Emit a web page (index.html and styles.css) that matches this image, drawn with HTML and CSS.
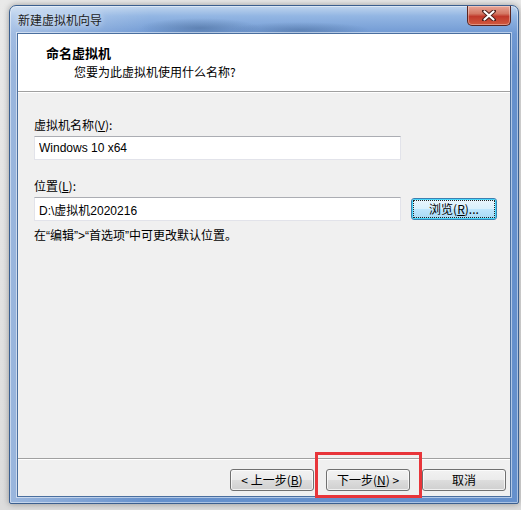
FILE: index.html
```html
<!DOCTYPE html>
<html lang="zh-CN">
<head>
    <meta charset="UTF-8">
    <meta name="viewport" content="width=device-width, initial-scale=1.0">
    <title>新建虚拟机向导</title>
    <link rel="stylesheet" href="styles.css">
</head>
<body>
    <div class="window">
        <div class="titlebar">
            <span class="title">新建虚拟机向导</span>
            <button class="close" type="button" aria-label="关闭">
                <svg width="14" height="11" viewBox="0 0 14 11">
                    <path d="M2 1 L12 10 M12 1 L2 10" stroke="#4a1e1a" stroke-width="4" stroke-linecap="round"/>
                    <path d="M2.5 1.5 L11.5 9.5 M11.5 1.5 L2.5 9.5" stroke="#fff" stroke-width="2.2" stroke-linecap="round"/>
                </svg>
            </button>
        </div>

        <div class="client">
            <div class="header">
                <div class="header-title">命名虚拟机</div>
                <div class="header-sub">您要为此虚拟机使用什么名称?</div>
            </div>

            <div class="content">
                <div class="field">
                    <label for="vmName">虚拟机名称(<u>V</u>):</label>
                    <input id="vmName" class="textbox" type="text" value="Windows 10 x64">
                </div>

                <div class="field field-location">
                    <label for="vmPath">位置(<u>L</u>):</label>
                    <div class="row">
                        <input id="vmPath" class="textbox" type="text" value="D:\虚拟机2020216">
                        <button class="btn btn-browse" type="button"><span class="focus">浏览(<u>R</u>)...</span></button>
                    </div>
                </div>

                <p class="hint">在“编辑”&gt;“首选项”中可更改默认位置。</p>
            </div>

            <div class="footer">
                <button class="btn" type="button">&lt; 上一步(<u>B</u>)</button>
                <div class="next-wrap">
                    <button class="btn" type="button">下一步(<u>N</u>) &gt;</button>
                    <span class="highlight"></span>
                </div>
                <button class="btn" type="button">取消</button>
            </div>
        </div>
    </div>
</body>
</html>
```

FILE: styles.css
```css
:root {
    --face: #f0f0f0;
    --frame: #6590cc;
    --text: #000;
    --cjk: "Noto Sans CJK SC", sans-serif;
    --latin: "Liberation Sans", "Noto Sans CJK SC", sans-serif;
}

html, body {
    margin: 0;
    height: 100%;
}

body {
    background: linear-gradient(to bottom, #e9e9e9, #dcdcdc);
    font-family: var(--latin);
    font-size: 12px;
    color: var(--text);
    overflow: hidden;
}

/* window frame */
.window {
    width: 510px;
    height: 499px;
    margin: 5px 0 0 9px;
    padding: 0 7px 6px 7px;
    box-sizing: border-box;
    display: flex;
    flex-direction: column;
    border-radius: 7px 7px 2px 2px;
    border: 1px solid #3b5f8f;
    background:
        radial-gradient(ellipse 60px 10px at 190px 22px, rgba(40, 70, 110, 0.35), transparent),
        radial-gradient(ellipse 70px 8px at 290px 24px, rgba(40, 70, 110, 0.3), transparent),
        linear-gradient(to right, rgba(255, 255, 255, 0.35), transparent 140px),
        linear-gradient(to bottom, #c0d5ee 0, #93b6e3 10px, #7099d3 28px, var(--frame) 60px, var(--frame) 100%);
    box-shadow: 0 0 6px rgba(0, 0, 0, 0.35), inset 0 0 0 1px rgba(255, 255, 255, 0.45);
}

.titlebar {
    height: 27px;
    display: flex;
    align-items: flex-start;
    flex: none;
}

.title {
    margin: 7px 0 0 1px;
    font-family: var(--cjk);
    font-size: 12px;
    line-height: 14px;
    color: #1c1c1c;
    text-shadow: 0 0 6px rgba(255, 255, 255, 0.9);
}

.close {
    margin-left: auto;
    width: 44px;
    height: 20px;
    padding: 0;
    border: 1px solid #5a2520;
    border-top: none;
    border-radius: 0 0 5px 5px;
    background: linear-gradient(to bottom, #e8a597 0, #d47864 40%, #c0392b 55%, #d25a3e 100%);
    box-shadow: inset 0 0 0 1px rgba(255, 255, 255, 0.35);
    display: flex;
    align-items: center;
    justify-content: center;
}

/* client area */
.client {
    flex: 1;
    display: flex;
    flex-direction: column;
    background: var(--face);
    border: 1px solid #4a6f9f;
    box-shadow: 0 0 0 1px rgba(255, 255, 255, 0.5);
}

.header {
    height: 57px;
    background: #fff;
    border-bottom: 1px solid #a0a0a0;
    box-shadow: 0 1px 0 #fff;
    font-family: var(--cjk);
    flex: none;
}

.header-title {
    margin: 11px 0 0 28px;
    font-weight: bold;
    font-size: 13px;
    line-height: 16px;
}

.header-sub {
    margin: 3px 0 0 56px;
    line-height: 16px;
}

.content {
    flex: 1;
    padding: 26px 0 0 16px;
}

.field label {
    display: block;
    font-family: var(--cjk);
    line-height: 14px;
    margin-bottom: 4px;
}

.field-location {
    margin-top: 19px;
}

.row {
    display: flex;
    align-items: center;
    gap: 10px;
}

.textbox {
    width: 367px;
    height: 24px;
    box-sizing: border-box;
    margin: 0;
    padding: 0 4px;
    border: 1px solid #e2e3ea;
    border-top-color: #abadb3;
    background: #fff;
    font-family: var(--latin);
    font-size: 12px;
    color: #000;
    outline: none;
}

.hint {
    margin: 8px 0 0;
    font-family: var(--latin);
    line-height: 14px;
}

/* push buttons */
.btn {
    width: 84px;
    height: 22px;
    padding: 0;
    border: 1px solid #707070;
    border-radius: 3px;
    background: linear-gradient(to bottom, #f2f2f2 0, #ebebeb 50%, #dddddd 51%, #cfcfcf 100%);
    box-shadow: inset 0 0 0 1px rgba(255, 255, 255, 0.7);
    font-family: var(--cjk);
    font-size: 12px;
    line-height: 18px;
    color: #000;
}

.btn-browse {
    width: 86px;
    border-color: #3c7fb1;
    background: linear-gradient(to bottom, #eaf6fd 0, #d9f0fc 50%, #bee6fd 51%, #a7d9f5 100%);
    box-shadow: inset 0 0 0 1px #48d8fb;
}

.btn-browse .focus {
    display: block;
    margin: 2px;
    outline: 1px dotted #222;
    line-height: 16px;
}

.footer {
    height: 38px;
    border-top: 1px solid #a0a0a0;
    box-shadow: inset 0 1px 0 #fff;
    display: flex;
    align-items: center;
    justify-content: flex-end;
    gap: 12px;
    padding: 4px 4px 0 0;
    box-sizing: border-box;
    flex: none;
}

.next-wrap {
    position: relative;
    display: flex;
}

/* red marker drawn over the next button */
.highlight {
    position: absolute;
    left: -11px;
    right: -12px;
    top: -17px;
    bottom: -7px;
    border: 3px solid #e8353a;
    pointer-events: none;
}
```
